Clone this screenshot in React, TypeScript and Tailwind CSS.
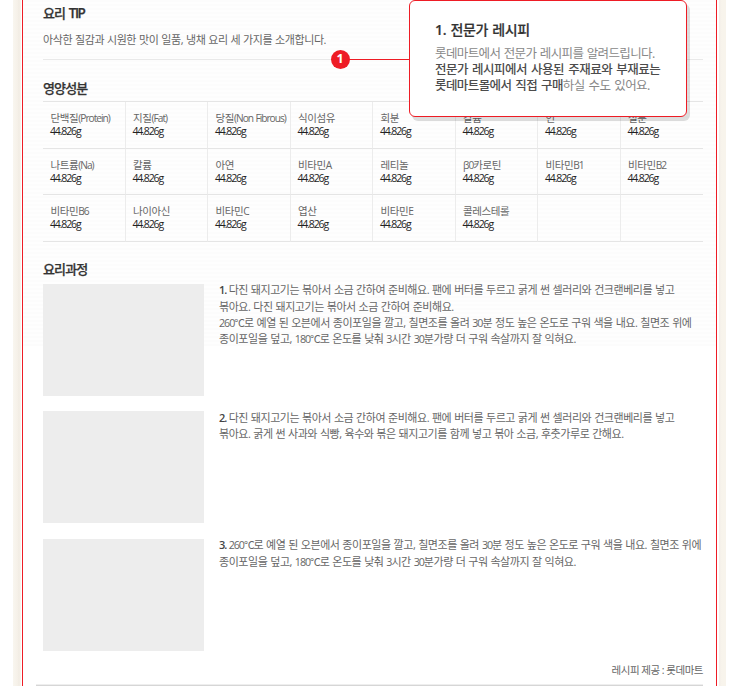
import React from "react";

const nutrients = [
  "단백질(Protein)", "지질(Fat)", "당질(Non Fibrous)", "식이섬유", "회분", "칼륨", "인", "철분",
  "나트륨(Na)", "칼륨", "아연", "비타민A", "레티놀", "β0카로틴", "비타민B1", "비타민B2",
  "비타민B6", "나이아신", "비타민C", "엽산", "비타민E", "콜레스테롤", "", "",
];

const steps = [
  [
    "다진 돼지고기는 볶아서 소금 간하여 준비해요. 팬에 버터를 두르고 굵게 썬 셀러리와 건크랜베리를 넣고",
    "볶아요. 다진 돼지고기는 볶아서 소금 간하여 준비해요.",
    "260℃로 예열 된 오븐에서 종이포일을 깔고, 칠면조를 올려 30분 정도 높은 온도로 구워 색을 내요. 칠면조 위에",
    "종이포일을 덮고, 180℃로 온도를 낮춰 3시간 30분가량 더 구워 속살까지 잘 익혀요.",
  ],
  [
    "다진 돼지고기는 볶아서 소금 간하여 준비해요. 팬에 버터를 두르고 굵게 썬 셀러리와 건크랜베리를 넣고",
    "볶아요. 굵게 썬 사과와 식빵, 육수와 볶은 돼지고기를 함께 넣고 볶아 소금, 후춧가루로 간해요.",
  ],
  [
    "260℃로 예열 된 오븐에서 종이포일을 깔고, 칠면조를 올려 30분 정도 높은 온도로 구워 색을 내요. 칠면조 위에",
    "종이포일을 덮고, 180℃로 온도를 낮춰 3시간 30분가량 더 구워 속살까지 잘 익혀요.",
  ],
];

// Digits and Latin runs are set tighter than the Hangul around them.
function Mixed({ text }: { text: string }) {
  return (
    <>
      {text.split(/([0-9A-Za-z℃β()]+)/).map((part, i) =>
        i % 2 ? <span key={i} className="text-[0.97em] tracking-[-1px]">{part}</span> : part
      )}
    </>
  );
}

function Heading({ children, className }: { children: React.ReactNode; className: string }) {
  return (
    <h2 className={`text-[13px] leading-[18px] font-medium tracking-[-0.85px] text-[#333] [-webkit-text-stroke:0.25px_#333] ${className}`}>
      {children}
    </h2>
  );
}

export default function App() {
  return (
    <div className="relative flex h-[686px] w-[740px] overflow-hidden bg-white pl-[13px] font-['Open_Sans','Noto_Sans_CJK_KR',sans-serif] text-[11px] text-[#666]">
      <div className="w-[8px] shrink-0 bg-[linear-gradient(90deg,#f9f6ef,#f5f0e8_60%,#f1ece3_75%,#f8f4ed)]" />
      <div className="ml-px w-[695px] shrink-0 border-x border-[#ee1c25] bg-[repeating-linear-gradient(180deg,#fcfcfc_0px,#fcfcfc_2px,#fefefe_2px,#fefefe_4px)] bg-[length:100%_346px] bg-no-repeat pl-[13px]">
        <main className="w-[667px] pl-[7px]">
          <Heading className="pt-1">요리 <span className="ml-px text-[13.5px] font-semibold tracking-[-1.5px]">TIP</span></Heading>
          <p className="mt-[9px] h-[29px] border-b border-[#e9e9e9] leading-[18px] tracking-[-0.42px] whitespace-nowrap [word-spacing:0.45px]">
            아삭한 질감과 시원한 맛이 일품, 냉채 요리 세 가지를 소개합니다.
          </p>
          <Heading className="mt-[19px]">영양성분</Heading>

          <div className="mt-1 grid grid-cols-8 grid-rows-[47px_46px_47px] border-t border-[#e5e5e5]">
            {nutrients.map((name, i) => (
              <div
                key={i}
                className="border-r border-b border-r-[#ececec] border-b-[#e5e5e5] pt-[9.5px] pl-[7.5px] leading-[13.5px] whitespace-nowrap [&:nth-child(8n)]:border-r-0"
              >
                {name && (
                  <>
                    <div className="text-[10.5px] tracking-[-0.4px]"><Mixed text={name} /></div>
                    <div className="-ml-[0.5px] text-[10.5px] tracking-[-1.15px] text-[#222]">44.826g</div>
                  </>
                )}
              </div>
            ))}
          </div>

          <Heading className="mt-[18px]">요리과정</Heading>
          <div className="mt-[5.6px] flex flex-col gap-[15.4px]">
            {steps.map((lines, i) => (
              <div key={i} className="flex h-[112.2px]">
                <div className="w-[161px] shrink-0 bg-[#ededed]" />
                <div className="-mt-[1.4px] ml-[15px] leading-[16.4px] tracking-[-0.45px] whitespace-nowrap [word-spacing:0.45px]">
                  {lines.map((line, j) => (
                    <p key={j}>
                      {j === 0 && <b className="font-semibold tracking-[-1px] text-[#444]">{i + 1}. </b>}
                      <Mixed text={line} />
                    </p>
                  ))}
                </div>
              </div>
            ))}
          </div>
          <p className="mt-[9.8px] text-right text-[10.5px] leading-[18px] tracking-[-0.5px]">레시피 제공 : 롯데마트</p>
          <div className="mt-[5px] -ml-[7px] h-[2px] border-t border-[#eee] bg-[#d6d6d6]" />
        </main>
      </div>
      <div className="ml-[2px] w-[7px] shrink-0 bg-[linear-gradient(90deg,#f3eee8,#f8f4ec_40%,#f8f4ec)]" />

      <div className="absolute top-[59px] left-[340px] h-px w-[70px] bg-[#ee1c25]" />
      <div className="absolute top-[49.5px] left-[330.5px] flex h-[19px] w-[19px] items-center justify-center rounded-full bg-[#ee1c25] text-[12.5px] leading-none font-bold text-white">1</div>
      <aside className="absolute top-0 left-[409px] h-[117px] w-[278px] rounded-[6px] border border-[#ee1c25] bg-white pt-[19px] pl-[25px] whitespace-nowrap shadow-[3px_4px_0_rgba(0,0,0,0.13)]">
        <h3 className="text-[14px] leading-[20px] font-medium tracking-[-0.35px] text-[#333] [-webkit-text-stroke:0.2px_#333] [word-spacing:1px]"><span className="font-semibold">1. </span>전문가 레시피</h3>
        <div className="mt-[6px] text-[12.5px] leading-[16px] tracking-[-0.62px] text-[#888] [word-spacing:0.8px]">
          <p>롯데마트에서 전문가 레시피를 알려드립니다.</p>
          <p className="font-medium tracking-[-0.5px] text-[#4c4c4c] [word-spacing:1.3px]">전문가 레시피에서 사용된 주재료와 부재료는</p>
          <p className="tracking-[-0.58px] [word-spacing:1.2px]"><span className="font-medium text-[#4c4c4c]">롯데마트몰에서 직접 구매</span>하실 수도 있어요.</p>
        </div>
      </aside>
    </div>
  );
}
